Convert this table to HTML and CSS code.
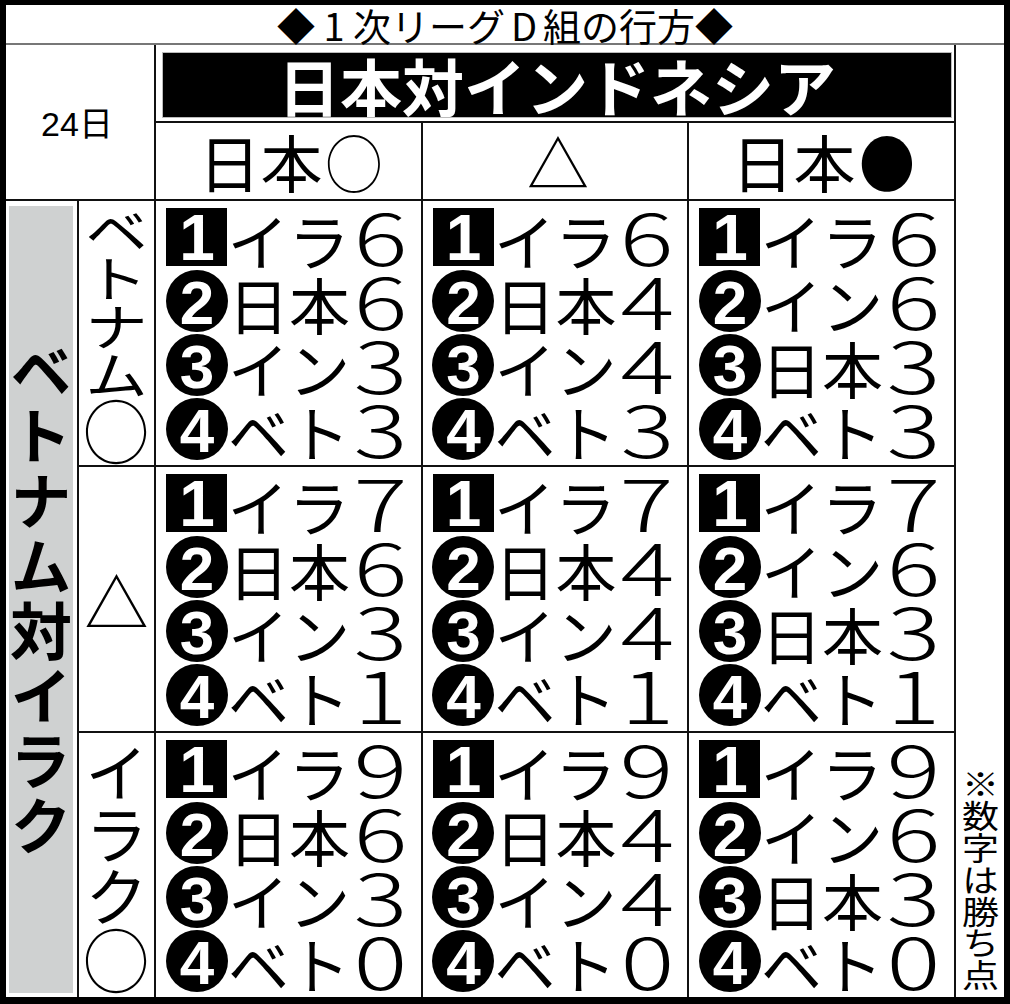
FILE: index.html
```html
<!DOCTYPE html>
<html lang="ja">
<head>
<meta charset="utf-8">
<title>1次リーグD組の行方</title>
<link rel="stylesheet" href="styles.css">
</head>
<body>
<div class="board">
  <div class="title">◆<span class="tn">1</span>次リーグ<span class="tn">D</span>組の行方◆</div>
  <div class="date">24日</div>
  <div class="banner-cell"><div class="banner">日本対インドネシア</div></div>
  <div class="note"><span class="note-text">※数字は勝ち点</span></div>
  <div class="head">日本<span class="ell">◯</span></div>
  <div class="head">△</div>
  <div class="head">日本<span class="ell">●</span></div>
  <div class="side"><div class="side-inner"><span class="side-text">ベトナム対イラク</span></div></div>

  <div class="label"><span class="k">ベ</span><span class="k">ト</span><span class="k">ナ</span><span class="k">ム</span><span class="o">◯</span></div>
  <div class="cell">
    <div class="ln"><span class="sq">1</span><span class="tx">イラ<span class="dg">6</span></span></div>
    <div class="ln"><span class="ci">2</span><span class="tx">日本<span class="dg">6</span></span></div>
    <div class="ln"><span class="ci">3</span><span class="tx">イン<span class="dg">3</span></span></div>
    <div class="ln"><span class="ci">4</span><span class="tx">ベト<span class="dg">3</span></span></div>
  </div>
  <div class="cell">
    <div class="ln"><span class="sq">1</span><span class="tx">イラ<span class="dg">6</span></span></div>
    <div class="ln"><span class="ci">2</span><span class="tx">日本<span class="dg">4</span></span></div>
    <div class="ln"><span class="ci">3</span><span class="tx">イン<span class="dg">4</span></span></div>
    <div class="ln"><span class="ci">4</span><span class="tx">ベト<span class="dg">3</span></span></div>
  </div>
  <div class="cell">
    <div class="ln"><span class="sq">1</span><span class="tx">イラ<span class="dg">6</span></span></div>
    <div class="ln"><span class="ci">2</span><span class="tx">イン<span class="dg">6</span></span></div>
    <div class="ln"><span class="ci">3</span><span class="tx">日本<span class="dg">3</span></span></div>
    <div class="ln"><span class="ci">4</span><span class="tx">ベト<span class="dg">3</span></span></div>
  </div>

  <div class="label"><span class="tri">△</span></div>
  <div class="cell">
    <div class="ln"><span class="sq">1</span><span class="tx">イラ<span class="dg">7</span></span></div>
    <div class="ln"><span class="ci">2</span><span class="tx">日本<span class="dg">6</span></span></div>
    <div class="ln"><span class="ci">3</span><span class="tx">イン<span class="dg">3</span></span></div>
    <div class="ln"><span class="ci">4</span><span class="tx">ベト<span class="dg">1</span></span></div>
  </div>
  <div class="cell">
    <div class="ln"><span class="sq">1</span><span class="tx">イラ<span class="dg">7</span></span></div>
    <div class="ln"><span class="ci">2</span><span class="tx">日本<span class="dg">4</span></span></div>
    <div class="ln"><span class="ci">3</span><span class="tx">イン<span class="dg">4</span></span></div>
    <div class="ln"><span class="ci">4</span><span class="tx">ベト<span class="dg">1</span></span></div>
  </div>
  <div class="cell">
    <div class="ln"><span class="sq">1</span><span class="tx">イラ<span class="dg">7</span></span></div>
    <div class="ln"><span class="ci">2</span><span class="tx">イン<span class="dg">6</span></span></div>
    <div class="ln"><span class="ci">3</span><span class="tx">日本<span class="dg">3</span></span></div>
    <div class="ln"><span class="ci">4</span><span class="tx">ベト<span class="dg">1</span></span></div>
  </div>

  <div class="label last"><span class="k2">イ</span><span class="k2">ラ</span><span class="k2">ク</span><span class="o">◯</span></div>
  <div class="cell last">
    <div class="ln"><span class="sq">1</span><span class="tx">イラ<span class="dg">9</span></span></div>
    <div class="ln"><span class="ci">2</span><span class="tx">日本<span class="dg">6</span></span></div>
    <div class="ln"><span class="ci">3</span><span class="tx">イン<span class="dg">3</span></span></div>
    <div class="ln"><span class="ci">4</span><span class="tx">ベト<span class="dg">0</span></span></div>
  </div>
  <div class="cell last">
    <div class="ln"><span class="sq">1</span><span class="tx">イラ<span class="dg">9</span></span></div>
    <div class="ln"><span class="ci">2</span><span class="tx">日本<span class="dg">4</span></span></div>
    <div class="ln"><span class="ci">3</span><span class="tx">イン<span class="dg">4</span></span></div>
    <div class="ln"><span class="ci">4</span><span class="tx">ベト<span class="dg">0</span></span></div>
  </div>
  <div class="cell last">
    <div class="ln"><span class="sq">1</span><span class="tx">イラ<span class="dg">9</span></span></div>
    <div class="ln"><span class="ci">2</span><span class="tx">イン<span class="dg">6</span></span></div>
    <div class="ln"><span class="ci">3</span><span class="tx">日本<span class="dg">3</span></span></div>
    <div class="ln"><span class="ci">4</span><span class="tx">ベト<span class="dg">0</span></span></div>
  </div>
</div>
</body>
</html>
```

FILE: styles.css
```css
* { box-sizing: border-box; }

body {
  margin: 0;
  background: #fff;
}

.board {
  width: 1010px;
  height: 1004px;
  border-style: solid;
  border-color: #000;
  border-width: 5px 6px 7px 6px;
  display: grid;
  grid-template-columns: 73px 77px 267px 266px 267px 48px;
  grid-template-rows: 40px 78px 78px 266px 266px 264px;
  font-family: "Noto Sans CJK JP", sans-serif;
  color: #000;
  background: #fff;
}

.title {
  grid-column: 1 / -1;
  grid-row: 1;
  border-bottom: 2px solid #777;
  display: flex;
  align-items: center;
  justify-content: center;
  font-size: 38px;
  line-height: 1;
  padding-top: 2px;
}

.tn {
  display: inline-block;
  width: 38px;
  text-align: center;
}

.date {
  grid-column: 1 / 3;
  grid-row: 2 / 4;
  border-right: 2px solid #111;
  border-bottom: 2px solid #111;
  display: flex;
  align-items: center;
  justify-content: center;
  font-family: "Liberation Sans", "Noto Sans CJK JP", sans-serif;
  font-size: 34px;
  line-height: 1;
  padding-top: 4px;
  padding-right: 6px;
}

.banner-cell {
  grid-column: 3 / 6;
  grid-row: 2;
  border-right: 2px solid #111;
  border-bottom: 2px solid #111;
  padding: 8px 3px 4px 7px;
}

.banner {
  height: 100%;
  background: #000;
  color: #fff;
  font-weight: 700;
  font-size: 62px;
  line-height: 1;
  display: flex;
  align-items: center;
  justify-content: center;
  outline: 1px solid #bbb;
}

.note {
  grid-column: 6;
  grid-row: 2 / 7;
  display: flex;
  align-items: flex-end;
  justify-content: center;
  padding-bottom: 6px;
}

.note-text {
  writing-mode: vertical-rl;
  font-size: 37px;
  line-height: 1;
  transform: scaleY(0.86);
  transform-origin: 50% 100%;
}

.head {
  border-right: 2px solid #111;
  border-bottom: 2px solid #111;
  display: flex;
  align-items: center;
  justify-content: center;
  font-size: 62px;
  line-height: 1;
  padding-left: 6px;
}

.ell {
  display: inline-block;
  transform: scaleX(0.9);
}

.side {
  grid-column: 1;
  grid-row: 4 / 7;
  border-right: 2px solid #111;
  padding: 5px 4px 4px 3px;
}

.side-inner {
  height: 100%;
  background: #cfd1d1;
  display: flex;
  align-items: center;
  justify-content: center;
}

.side-text {
  writing-mode: vertical-rl;
  font-size: 62px;
  font-weight: 700;
  letter-spacing: 3px;
  line-height: 1;
}

.label {
  border-right: 2px solid #111;
  border-bottom: 2px solid #111;
  display: flex;
  flex-direction: column;
  align-items: center;
  justify-content: center;
}

.label.last,
.cell.last {
  border-bottom: 0;
}

.k {
  display: block;
  font-size: 62px;
  line-height: 48px;
  height: 48px;
  transform: scaleY(0.8);
}

.k2 {
  display: block;
  font-size: 62px;
  line-height: 62px;
  height: 62px;
}

.o {
  display: block;
  font-size: 68px;
  line-height: 66px;
  height: 66px;
  transform: scaleX(0.95);
}

.tri {
  font-size: 64px;
  line-height: 1;
}

.cell {
  border-right: 2px solid #111;
  border-bottom: 2px solid #111;
  display: flex;
  flex-direction: column;
  justify-content: center;
  align-items: center;
}

.ln {
  display: flex;
  align-items: center;
  height: 64px;
  font-size: 61px;
  line-height: 64px;
  white-space: nowrap;
}

.sq {
  width: 61px;
  height: 58px;
  background: #000;
  color: #fff;
  font: 700 64px/60px "Liberation Sans", sans-serif;
  text-align: center;
}

.ci {
  width: 62px;
  height: 62px;
  border-radius: 50%;
  background: #000;
  color: #fff;
  font: 700 62px/65px "Liberation Sans", sans-serif;
  text-align: center;
}

.tx {
  display: block;
}

.dg {
  display: inline-block;
  width: 61px;
  text-align: center;
  font-size: 72px;
  font-weight: 300;
  line-height: 64px;
  transform: scaleX(1.4);
}
```
